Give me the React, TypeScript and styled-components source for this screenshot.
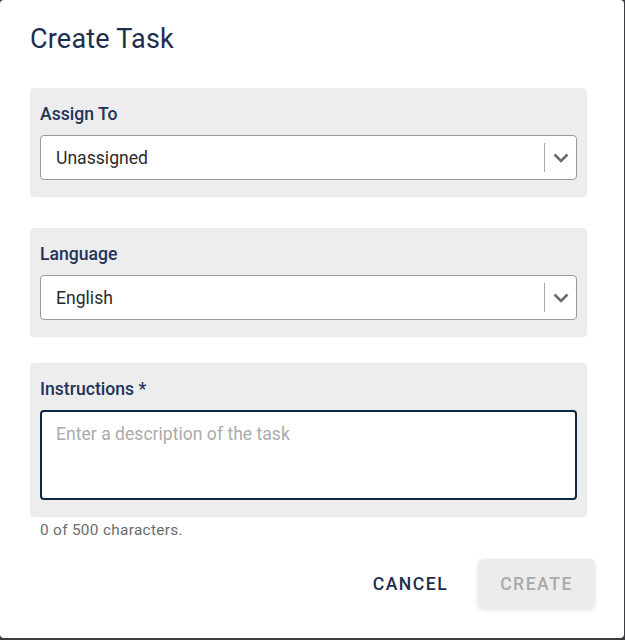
import React from "react";
import styled, { createGlobalStyle } from "styled-components";

const Global = createGlobalStyle`
  html, body { margin: 0; padding: 0; background: #3b3d40; }
  body { font-family: Roboto, "Liberation Sans", sans-serif; }
  * { box-sizing: border-box; }
`;

const Dialog = styled.div`
  width: 624px;
  height: 638px;
  background: #ffffff;
  border-radius: 4px;
  padding: 22px 37px 0 30px;
  display: flex;
  flex-direction: column;
`;

const Title = styled.h2`
  margin: 0;
  font-family: Roboto, sans-serif;
  font-weight: 400;
  font-size: 27px;
  line-height: 34px;
  color: #1d2d4e;
  letter-spacing: 0.2px;
`;

const Section = styled.div<{ $top: number }>`
  margin-top: ${(p) => p.$top}px;
  background: #ededed;
  border-radius: 4px;
  padding: 14px 10px 17px;
  display: flex;
  flex-direction: column;
`;

const Label = styled.label`
  font-size: 17.6px;
  line-height: 24px;
  font-weight: 500;
  color: #22335a;
  margin-bottom: 9px;
`;

const Control = styled.div`
  height: 45px;
  background: #fff;
  border: 1px solid #9a9a9a;
  border-radius: 4px;
  display: flex;
  align-items: center;
`;

const Value = styled.div`
  flex: 1;
  padding-left: 15px;
  font-size: 17.6px;
  color: #2b2b2b;
`;

const Separator = styled.span`
  align-self: stretch;
  width: 1px;
  margin: 7px 0;
  background: #a8a8a8;
`;

const Indicator = styled.div`
  width: 31px;
  display: flex;
  align-items: center;
  justify-content: center;
  color: #6b6b6b;
`;

const TextArea = styled.textarea`
  height: 90px;
  resize: none;
  border: 2px solid #0f2747;
  border-radius: 4px;
  padding: 9px 14px;
  font-family: Roboto, sans-serif;
  font-size: 17.6px;
  line-height: 26px;
  color: #2b2b2b;
  outline: none;
  caret-color: #222;
  &::placeholder { color: #ababab; }
`;

const Helper = styled.div`
  margin-top: 3px;
  padding-left: 10px;
  font-size: 15.4px;
  line-height: 20px;
  color: #6c6c6c;
  letter-spacing: 0.3px;
`;

const Footer = styled.div`
  margin-top: 19px;
  margin-right: -8px;
  display: flex;
  justify-content: flex-end;
  align-items: center;
  gap: 9px;
`;

const Button = styled.button<{ $variant: "text" | "disabled" }>`
  height: 50px;
  min-width: 117px;
  padding: 0 16px;
  border: none;
  border-radius: 6px;
  font-family: Roboto, sans-serif;
  font-weight: 500;
  font-size: 17.6px;
  letter-spacing: 1.5px;
  text-transform: uppercase;
  background: ${(p) => (p.$variant === "disabled" ? "#ececec" : "transparent")};
  color: ${(p) => (p.$variant === "disabled" ? "#a9a9a9" : "#1d2d4e")};
  box-shadow: ${(p) =>
    p.$variant === "disabled" ? "0 1px 4px rgba(0,0,0,0.12)" : "none"};
`;

const Chevron = () => (
  <svg width="16" height="10" viewBox="0 0 16 10">
    <polyline
      points="1.5,1.5 8,8 14.5,1.5"
      fill="none"
      stroke="currentColor"
      strokeWidth="2.6"
    />
  </svg>
);

const Select = ({ value }: { value: string }) => (
  <Control>
    <Value>{value}</Value>
    <Separator />
    <Indicator>
      <Chevron />
    </Indicator>
  </Control>
);

export default function App() {
  return (
    <>
      <Global />
      <Dialog>
        <Title>Create Task</Title>
        <Section $top={32}>
          <Label>Assign To</Label>
          <Select value="Unassigned" />
        </Section>
        <Section $top={31}>
          <Label>Language</Label>
          <Select value="English" />
        </Section>
        <Section $top={26}>
          <Label>Instructions *</Label>
          <TextArea autoFocus placeholder="Enter a description of the task" />
        </Section>
        <Helper>0 of 500 characters.</Helper>
        <Footer>
          <Button $variant="text">Cancel</Button>
          <Button $variant="disabled" disabled>
            Create
          </Button>
        </Footer>
      </Dialog>
    </>
  );
}
